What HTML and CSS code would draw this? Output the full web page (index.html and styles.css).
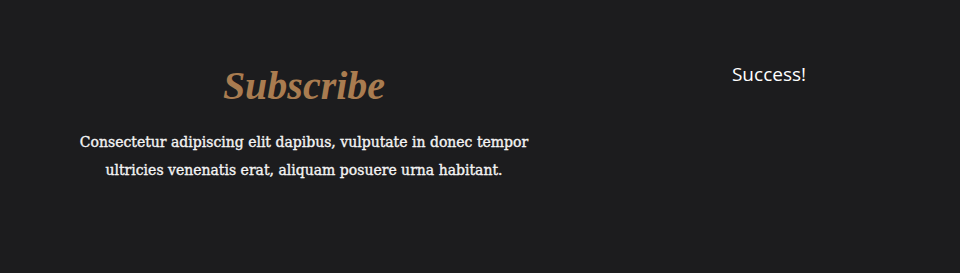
FILE: index.html
```html
<!DOCTYPE html>
<html>
<head>
<meta charset="utf-8">
<link rel="stylesheet" href="styles.css">
</head>
<body>
<section class="subscribe">
  <div class="intro">
    <h2 class="title">Subscribe</h2>
    <p class="lead">Consectetur adipiscing elit dapibus, vulputate in donec tempor ultricies venenatis erat, aliquam posuere urna habitant.</p>
  </div>
  <div class="status">
    <p class="success">Success!</p>
  </div>
</section>
</body>
</html>
```
FILE: styles.css
```css
html, body {
  margin: 0;
  padding: 0;
  background: #1c1c1e;
  height: 100%;
}
.subscribe {
  display: grid;
  grid-template-columns: 608px 322px;
  padding-top: 60px;
}
.intro {
  text-align: center;
  display: flex;
  flex-direction: column;
  align-items: center;
}
.title {
  margin: 0;
  font-family: "Liberation Serif", serif;
  font-style: italic;
  font-weight: bold;
  font-size: 40px;
  line-height: 52px;
  color: #a97c50;
}
.lead {
  margin: 16px 0 0;
  width: 470px;
  font-family: "DejaVu Serif", serif;
  font-size: 14px;
  line-height: 28px;
  color: #f4f4f4;
  -webkit-text-stroke: 0.35px #f4f4f4;
}
.status {
  text-align: center;
}
.success {
  margin: 0;
  font-family: "Open Sans", sans-serif;
  font-size: 19px;
  line-height: 28px;
  color: #ffffff;
}
```
